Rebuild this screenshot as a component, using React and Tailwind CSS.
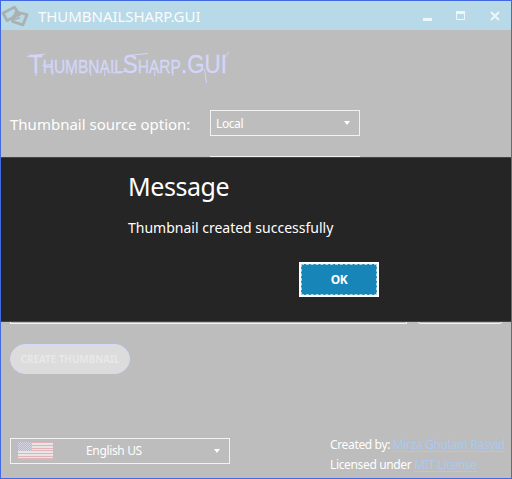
function Logo() {
  return (
    <svg width="28" height="27" viewBox="0 0 28 27" className="block" fill="none" stroke="#aab1b3" strokeLinejoin="round">
      <path d="M2 11 13.5 5.300 18.500 12.500 6 18.500Z" strokeWidth="2.800" />
      <path d="M15 10 26 12.5 22 22.800 11.500 19.500Z" strokeWidth="2.800" />
      <path d="M11 14.500 17 12.5M14 17.5 19 15.5" strokeWidth="1.8" />
    </svg>
  );
}

function Wordmark() {
  return (
    <svg width="212" height="48" viewBox="0 0 212 48" className="block" fill="#d3d5fb" stroke="#d3d5fb">
      <text
        x="5"
        y="33"
        fontSize="26"
        strokeWidth="0.3"
        textLength="198"
        lengthAdjust="spacingAndGlyphs"
        className="font-['Liberation_Sans_Narrow','Liberation_Sans',sans-serif] [font-variant-caps:small-caps]"
      >
        ThumbnailSharp.GUI
      </text>
      <path fill="none" strokeWidth="1" d="M3 16.500 21 14M12.500 32 12 36M29 31 28.500 35M48 31 47.500 35M66 30 67 36M81 30 80.500 36M89 33 101 31.500M104 15.500 124 13.500M131 30 130.500 36M148 29 149 36M180.500 29 182.500 43M201 17 205 12M18 25.500 27 24.500" />
    </svg>
  );
}

function Flag() {
  return (
    <svg width="35" height="18" viewBox="0 0 35 18" className="block" shapeRendering="crispEdges">
      <rect width="35" height="18" fill="#e8e5e6" />
      {[0, 3, 6, 8, 11, 14, 16].map((y) => (
        <rect key={y} y={y} width="35" height={y === 16 ? 2 : 1.4} fill="#dfb3b8" />
      ))}
      <rect width="14" height="9" fill="#b8b9cd" />
      {[0, 1, 2, 3, 4, 5, 6, 7, 8].map((r) =>
        [0, 1, 2, 3, 4, 5, 6].map((c) => (
          <rect key={`${r}-${c}`} x={c * 2 + (r % 2)} y={r} width="1" height="1" fill="#d3d4df" />
        ))
      )}
    </svg>
  );
}

function Arrow() {
  return (
    <svg width="6" height="4" viewBox="0 0 6 4" className="block">
      <path d="M0 0H6L3 4Z" fill="#fff" />
    </svg>
  );
}

export default function App() {
  return (
    <div className="relative flex h-[479px] w-[512px] flex-col overflow-hidden border border-[#4169e1] bg-[#bdbdbd] font-['Noto_Sans','Open_Sans',sans-serif] text-white">
      <header className="flex h-[29px] shrink-0 items-center bg-[#b8d9e7]">
        <Logo />
        <h1 className="ml-[9px] text-[15px] leading-[20px] tracking-[-0.05px] whitespace-nowrap text-[#f8fcfd]">THUMBNAILSHARP.GUI</h1>
        <svg width="80" height="12" viewBox="0 0 80 12" className="ml-auto mr-[8px] block" fill="none" stroke="#edf6f9">
          <path d="M0 9.500H9" strokeWidth="3" />
          <path d="M33 2.5H42" strokeWidth="3" />
          <path d="M33.5 3V9.500H41.5V3" />
          <path d="M68 2 76 10M76 2 68 10" strokeWidth="2" />
        </svg>
      </header>
      <main className="flex grow flex-col">
        <div className="ml-[23px] mt-[10px]">
          <Wordmark />
        </div>
        <div className="mt-[22px] flex h-[26px] items-center pl-[9px]">
          <span className="w-[200px] whitespace-nowrap pt-[3px] text-[15px]">Thumbnail source option:</span>
          <div className="flex h-[26px] w-[150px] items-center justify-between border border-[#f2f2f2] pl-[5px] pr-[9px]">
            <span className="pt-[2px] text-[12px] leading-[18px] tracking-[-0.4px]">Local</span>
            <Arrow />
          </div>
        </div>
        <div className="ml-[209px] mt-[20px] h-[26px] w-[150px] border border-[#f2f2f2]" />
        <div className="mt-[116px] flex h-[26px] gap-[11px] pl-[9px]">
          <div className="w-[397px] border border-[#f2f2f2]" />
          <div className="w-[84px] rounded-[2px] border border-[#f2f2f2]" />
        </div>
        <button className="ml-[9px] mt-[20px] flex h-[30px] w-[120px] shrink-0 items-center justify-center rounded-full border border-[#d3dafa] bg-[#dcdcdc] pt-px text-[10px] font-bold tracking-[-0.1px] whitespace-nowrap text-[#e8e8e8]">CREATE THUMBNAIL</button>
        <footer className="mt-auto flex justify-between pb-[3px] pl-[9px] pr-[6px] text-[12px]">
          <div className="mt-[4px] flex h-[26px] w-[220px] items-center border border-[#f2f2f2] pl-[7px] pr-[9px]">
            <Flag />
            <span className="ml-[33px] leading-[18px] tracking-[-0.35px]">English US</span>
            <span className="ml-auto"><Arrow /></span>
          </div>
          <div className="w-[175px] whitespace-nowrap pt-px leading-[20px] tracking-[-0.35px]">
            <p>Created by: <a className="text-[#a9c9f0] underline decoration-1 underline-offset-2 [text-decoration-skip-ink:none]">Mirza Ghulam Rasyid</a></p>
            <p>Licensed under <a className="text-[#a9c9f0] underline decoration-1 underline-offset-2 [text-decoration-skip-ink:none]">MIT License</a></p>
          </div>
        </footer>
      </main>
      <section role="dialog" className="absolute left-0 top-[156px] flex h-[165px] w-[510px] flex-col border-y border-[#444] bg-[#252525] pl-[127px] text-white">
        <h2 className="mt-[10px] text-[25px] leading-[36px] tracking-[-0.45px]">Message</h2>
        <p className="mt-[14px] text-[14px] leading-[20px] whitespace-nowrap">Thumbnail created successfully</p>
        <button className="ml-[171px] mt-[24px] h-[35px] w-[80px] border-2 border-white bg-[#1785b8]">
          <span className="flex h-full w-full items-center justify-center border border-dashed border-[#a8d3e7] text-[12px] font-bold tracking-[-0.6px]">OK</span>
        </button>
      </section>
    </div>
  );
}
